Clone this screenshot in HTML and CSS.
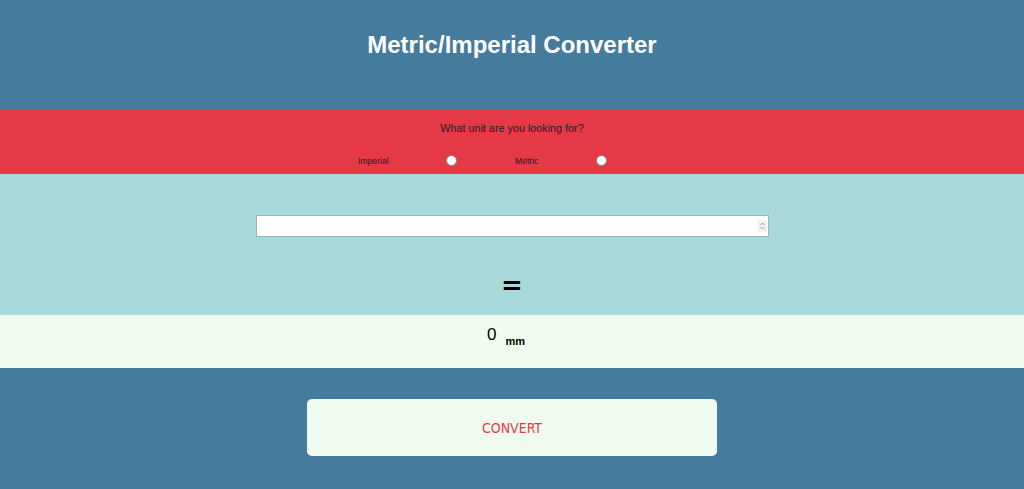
FILE: index.html
```html
<!DOCTYPE html>
<html>
<head>
<meta charset="utf-8">
<link rel="stylesheet" href="styles.css">
</head>
<body>
<header class="top">
  <h1 class="title">Metric/Imperial Converter</h1>
</header>
<section class="units">
  <p class="question">What unit are you looking for?</p>
  <div class="choices">
    <label class="choice choice-imperial"><span>Imperial</span><input type="radio" name="unit"></label>
    <label class="choice choice-metric"><span>Metric</span><input type="radio" name="unit"></label>
  </div>
</section>
<section class="entry">
  <div class="field">
    <input class="amount" type="number">
    <span class="spin"><svg width="9" height="12" viewBox="0 0 9 12"><path d="M2.5 5 L4.5 3 L6.5 5 M2.5 7 L4.5 9 L6.5 7" fill="none" stroke="#a0a0a0" stroke-width="1"/></svg></span>
  </div>
  <div class="equals">=</div>
</section>
<section class="result">
  <span class="value">0</span><span class="unit">mm</span>
</section>
<section class="actions">
  <button class="convert">CONVERT</button>
</section>
</body>
</html>
```
FILE: styles.css
```css
html, body { margin: 0; padding: 0; }
body {
  font-family: "Liberation Sans", Arial, sans-serif;
  background: #457b9d;
  height: 489px;
  overflow: hidden;
}
.top {
  height: 110px;
  background: #457b9d;
  display: flex;
  justify-content: center;
}
.title {
  margin: 0;
  padding-top: 31px;
  font-size: 24px;
  font-weight: bold;
  color: #ffffff;
  line-height: 28px;
}
.units {
  height: 64px;
  background: #e63946;
  display: flex;
  flex-direction: column;
  align-items: center;
}
.question {
  margin: 12px 0 0;
  font-size: 10.8px;
  line-height: 13px;
  color: #1d1d2b;
}
.choices {
  display: flex;
  gap: 58px;
  margin-top: 19px;
  padding-right: 59px;
}
.choice {
  display: flex;
  align-items: center;
  justify-content: space-between;
  font-size: 8.6px;
  color: #2a1a22;
  height: 13px;
}
.choice input { margin: 0; width: 11px; height: 11px; }
.choice-imperial { width: 99px; }
.choice-metric { width: 92px; }
.entry {
  height: 141px;
  background: #a8dadc;
  display: flex;
  flex-direction: column;
  align-items: center;
}
.field {
  position: relative;
  margin-top: 41px;
  width: 513px;
  height: 22px;
}
.amount {
  width: 513px;
  height: 22px;
  box-sizing: border-box;
  border: 1px solid #9bb6b8;
  background: #fff;
  display: block;
}
.spin {
  position: absolute;
  right: 2px;
  top: 5px;
  width: 9px;
  height: 12px;
  background: #f0f0f0;
  display: block;
}
.spin svg { display: block; }
.equals {
  margin-top: 35px;
  font-family: "DejaVu Sans", sans-serif;
  font-size: 26px;
  font-weight: bold;
  line-height: 26px;
  color: #000;
}
.result {
  height: 53px;
  background: #f1faee;
  display: flex;
  justify-content: center;
  align-items: flex-start;
  padding-right: 12px;
  box-sizing: border-box;
}
.value {
  font-size: 17px;
  line-height: 18px;
  margin-top: 11px;
  color: #000;
}
.unit {
  font-size: 11px;
  font-weight: bold;
  margin-top: 20px;
  margin-left: 9px;
  line-height: 12px;
}
.actions {
  display: flex;
  justify-content: center;
  padding-top: 31px;
}
.convert {
  width: 410px;
  height: 57px;
  border: none;
  border-radius: 5px;
  background: #f1faee;
  color: #e63946;
  font-family: "DejaVu Sans Condensed", "DejaVu Sans", sans-serif;
  font-stretch: condensed;
  font-size: 14px;
  padding: 0;
}
```
